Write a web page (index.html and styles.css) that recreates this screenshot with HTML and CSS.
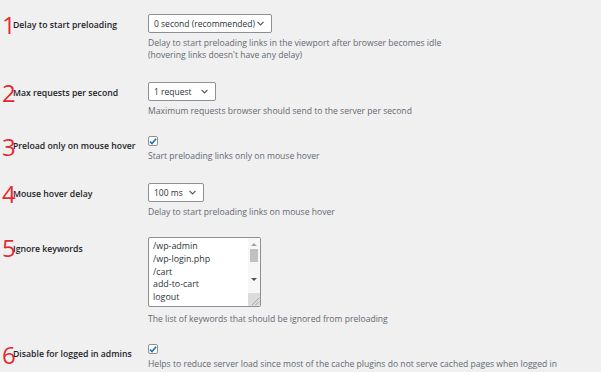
FILE: index.html
```html
<!DOCTYPE html>
<html>
<head>
<meta charset="utf-8">
<link rel="stylesheet" href="styles.css">
</head>
<body>
<div class="form">
  <div class="row">
    <div class="label"><span class="num">1</span><span class="text">Delay to start preloading</span></div>
    <div class="field">
      <div class="select w1"><span>0 second (recommended)</span><svg class="chev" width="7" height="5" viewBox="0 0 7 5"><polyline points="0.5,0.8 3.5,3.8 6.5,0.8" fill="none" stroke="#50575e" stroke-width="1.2"/></svg></div>
      <p class="desc">Delay to start preloading links in the viewport after browser becomes idle<br>(hovering links doesn't have any delay)</p>
    </div>
  </div>
  <div class="row">
    <div class="label"><span class="num">2</span><span class="text">Max requests per second</span></div>
    <div class="field">
      <div class="select w2"><span>1 request</span><svg class="chev" width="7" height="5" viewBox="0 0 7 5"><polyline points="0.5,0.8 3.5,3.8 6.5,0.8" fill="none" stroke="#50575e" stroke-width="1.2"/></svg></div>
      <p class="desc">Maximum requests browser should send to the server per second</p>
    </div>
  </div>
  <div class="row check-row">
    <div class="label"><span class="num">3</span><span class="text">Preload only on mouse hover</span></div>
    <div class="field">
      <span class="checkbox"><svg width="8" height="7" viewBox="0 0 8 7"><polyline points="1,3.6 3,5.6 7,0.8" fill="none" stroke="#2271b1" stroke-width="1.6"/></svg></span>
      <p class="desc">Start preloading links only on mouse hover</p>
    </div>
  </div>
  <div class="row">
    <div class="label"><span class="num">4</span><span class="text">Mouse hover delay</span></div>
    <div class="field">
      <div class="select w3"><span>100 ms</span><svg class="chev" width="7" height="5" viewBox="0 0 7 5"><polyline points="0.5,0.8 3.5,3.8 6.5,0.8" fill="none" stroke="#50575e" stroke-width="1.2"/></svg></div>
      <p class="desc">Delay to start preloading links on mouse hover</p>
    </div>
  </div>
  <div class="row ta-row">
    <div class="label"><span class="num">5</span><span class="text">Ignore keywords</span></div>
    <div class="field">
      <div class="textarea">
        <div class="lines">
          <div>/wp-admin</div>
          <div>/wp-login.php</div>
          <div>/cart</div>
          <div>add-to-cart</div>
          <div>logout</div>
        </div>
        <div class="scrollbar">
          <span class="arrow up"></span>
          <span class="thumb"></span>
          <span class="arrow down"></span>
          <span class="grip"><svg width="11" height="11" viewBox="0 0 11 11"><line x1="3" y1="10" x2="10" y2="3" stroke="#9a9a9a" stroke-width="0.8"/><line x1="6.5" y1="10" x2="10" y2="6.5" stroke="#9a9a9a" stroke-width="0.8"/></svg></span>
        </div>
      </div>
      <p class="desc tdesc">The list of keywords that should be ignored from preloading</p>
    </div>
  </div>
  <div class="row check-row">
    <div class="label"><span class="num">6</span><span class="text">Disable for logged in admins</span></div>
    <div class="field">
      <span class="checkbox"><svg width="8" height="7" viewBox="0 0 8 7"><polyline points="1,3.6 3,5.6 7,0.8" fill="none" stroke="#2271b1" stroke-width="1.6"/></svg></span>
      <p class="desc">Helps to reduce server load since most of the cache plugins do not serve cached pages when logged in</p>
    </div>
  </div>
</div>
</body>
</html>
```
FILE: styles.css
```css
html, body {
  margin: 0;
  padding: 0;
  background: #f0f0f1;
}
body {
  font-family: "Open Sans", "Noto Sans", sans-serif;
  color: #1d2327;
}
.form {
  padding-top: 4px;
}
.row {
  display: flex;
  padding: 10px 0 11px;
}
.check-row {
  padding-top: 6px;
}
.ta-row {
  padding-top: 8px;
}
.check-row .field {
  padding-top: 2px;
}
.label {
  width: 148px;
  flex: none;
  display: flex;
  align-items: flex-start;
}
.num {
  width: 13px;
  flex: none;
  font-size: 24px;
  line-height: 24px;
  margin-top: -1px;
  color: #e8262d;
  font-weight: 400;
  text-shadow: 0 0 1px #fff, 0 0 2px #fff;
  letter-spacing: -1px;
  padding-left: 2px;
  box-sizing: border-box;
}
.check-row .num {
  margin-top: 1px;
}
.text {
  font-size: 8.7px;
  font-weight: 600;
  line-height: 12px;
  padding-top: 5px;
  color: #1d2327;
  white-space: nowrap;
}
.check-row .text {
  padding-top: 6px;
}
.ta-row .text {
  padding-top: 6px;
}
.field {
  flex: 1;
}
.select {
  box-sizing: border-box;
  height: 19px;
  border: 1px solid #8c8f94;
  border-radius: 2px;
  background: #fff;
  display: flex;
  align-items: center;
  justify-content: space-between;
  padding: 0 7px 0 5px;
  font-size: 8.5px;
  color: #2c3338;
  white-space: nowrap;
}
.w1 { width: 124px; }
.w2 { width: 68px; }
.w3 { width: 56px; }
.chev { flex: none; }
.desc {
  margin: 4px 0 0;
  font-size: 8.6px;
  line-height: 12px;
  color: #646970;
  white-space: nowrap;
}
.checkbox {
  box-sizing: border-box;
  display: flex;
  align-items: center;
  justify-content: center;
  width: 10px;
  height: 10px;
  border: 1px solid #8c8f94;
  border-radius: 2px;
  background: #fff;
}
.check-row .desc {
  margin-top: 4px;
}
.textarea {
  box-sizing: border-box;
  width: 113px;
  height: 70px;
  border: 1px solid #8c8f94;
  border-radius: 2px;
  background: #fff;
  display: flex;
  overflow: hidden;
}
.lines {
  flex: 1;
  padding: 2px 0 0 4px;
  font-size: 8.9px;
  line-height: 12.8px;
  color: #2c3338;
  overflow: hidden;
}
.scrollbar {
  width: 12px;
  flex: none;
  background: #f7f7f7;
  display: flex;
  flex-direction: column;
  align-items: center;
}
.arrow {
  width: 0;
  height: 0;
  border-left: 3px solid transparent;
  border-right: 3px solid transparent;
}
.arrow.up {
  margin-top: 5px;
  border-bottom: 3px solid #a3a3a3;
}
.arrow.down {
  margin-top: 16px;
  border-top: 3px solid #505050;
}
.thumb {
  margin-top: 3px;
  width: 8px;
  height: 13px;
  background: #c1c1c1;
}
.grip {
  margin-top: auto;
  width: 12px;
  height: 13px;
  background: #dcdcdc;
  display: flex;
  align-items: flex-end;
  justify-content: flex-end;
}
.grip svg { display: block; }
.tdesc {
  margin-top: 6px;
}
```
